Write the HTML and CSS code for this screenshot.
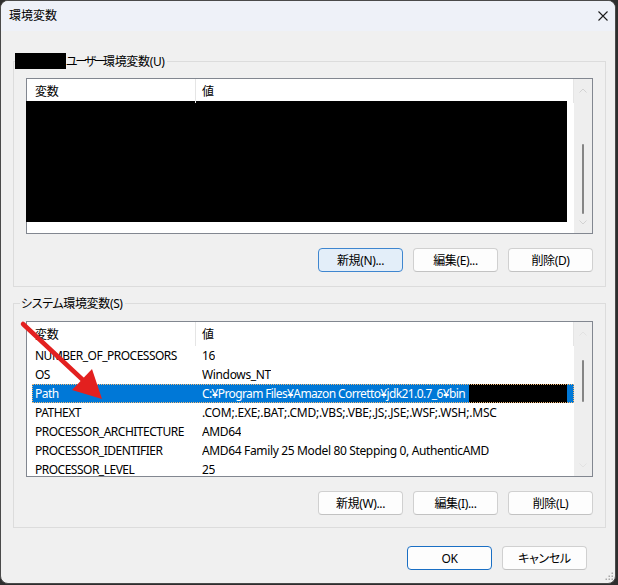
FILE: index.html
```html
<!DOCTYPE html>
<html lang="ja">
<head>
<meta charset="utf-8">
<title>環境変数</title>
<link rel="stylesheet" href="styles.css">
</head>
<body>
<div class="window">
  <div class="titlebar">
    <span class="title">環境変数</span>
    <svg class="close" width="10" height="10" viewBox="0 0 10 10"><path d="M0.5 0.5L9.5 9.5M9.5 0.5L0.5 9.5" stroke="#1b1b1b" stroke-width="1.1" fill="none"/></svg>
  </div>
  <div class="content">
    <div class="group">
      <div class="group-title user"><span class="redact-title"></span><span><span class="kana-tight">ユーザー</span>環境変数(U)</span></div>
      <div class="list">
        <div class="list-main open">
          <div class="list-header">
            <div class="hcell1">変数</div>
            <div class="hcell2">値</div>
          </div>
          <div class="redact-block"></div>
        </div>
        <div class="scrollbar">
          <svg class="arrow-up" width="8" height="5" viewBox="0 0 8 5"><path d="M0.5 4.5L4 1L7.5 4.5" stroke="#d2d2d2" fill="none"/></svg>
          <div class="thumb thumb-user"></div>
          <svg class="arrow-down" width="8" height="5" viewBox="0 0 8 5"><path d="M0.5 0.5L4 4L7.5 0.5" stroke="#d2d2d2" fill="none"/></svg>
        </div>
      </div>
      <div class="btn-row">
        <div class="btn focus">新規(N)...</div>
        <div class="btn">編集(E)...</div>
        <div class="btn">削除(D)</div>
      </div>
    </div>

    <div class="group sys">
      <div class="group-title system">システム環境変数(S)</div>
      <div class="list">
        <div class="list-main">
          <div class="list-header">
            <div class="hcell1">変数</div>
            <div class="hcell2">値</div>
          </div>
          <div class="row"><div class="cell1">NUMBER_OF_PROCESSORS</div><div class="cell2">16</div></div>
          <div class="row"><div class="cell1">OS</div><div class="cell2">Windows_NT</div></div>
          <div class="row selected"><div class="cell1">Path</div><div class="cell2"><span class="path-text">C:¥Program Files¥Amazon Corretto¥jdk21.0.7_6¥bin</span><span class="redact-row"></span></div></div>
          <div class="row"><div class="cell1">PATHEXT</div><div class="cell2 wide">.COM;.EXE;.BAT;.CMD;.VBS;.VBE;.JS;.JSE;.WSF;.WSH;.MSC</div></div>
          <div class="row"><div class="cell1">PROCESSOR_ARCHITECTURE</div><div class="cell2">AMD64</div></div>
          <div class="row"><div class="cell1">PROCESSOR_IDENTIFIER</div><div class="cell2">AMD64 Family 25 Model 80 Stepping 0, AuthenticAMD</div></div>
          <div class="row"><div class="cell1">PROCESSOR_LEVEL</div><div class="cell2">25</div></div>
        </div>
        <div class="scrollbar">
          <svg class="arrow-up" width="8" height="5" viewBox="0 0 8 5"><path d="M0.5 4.5L4 1L7.5 4.5" stroke="#e2e2e2" fill="none"/></svg>
          <div class="thumb thumb-sys"></div>
          <svg class="arrow-down" width="8" height="5" viewBox="0 0 8 5"><path d="M0.5 0.5L4 4L7.5 0.5" stroke="#e2e2e2" fill="none"/></svg>
        </div>
      </div>
      <div class="btn-row">
        <div class="btn">新規(W)...</div>
        <div class="btn">編集(I)...</div>
        <div class="btn">削除(L)</div>
      </div>
    </div>

    <div class="dialog-row">
      <div class="btn default">OK</div>
      <div class="btn">キャンセル</div>
    </div>
  </div>

  <svg class="red-arrow" width="120" height="410" viewBox="0 0 120 410">
    <line x1="23" y1="324" x2="84" y2="381" stroke="#e3201f" stroke-width="4.5" stroke-linecap="round"/>
    <polygon points="102,399 72,390 92,369" fill="#e3201f"/>
  </svg>
  <svg class="grip" width="10" height="10" viewBox="0 0 10 10">
    <rect x="7.5" y="1.5" width="1.5" height="1.5" fill="#a8a8a8"/>
    <rect x="7.5" y="4.5" width="1.5" height="1.5" fill="#a8a8a8"/>
    <rect x="4.5" y="4.5" width="1.5" height="1.5" fill="#a8a8a8"/>
    <rect x="7.5" y="7.5" width="1.5" height="1.5" fill="#a8a8a8"/>
    <rect x="4.5" y="7.5" width="1.5" height="1.5" fill="#a8a8a8"/>
    <rect x="1.5" y="7.5" width="1.5" height="1.5" fill="#a8a8a8"/>
  </svg>
</div>
</body>
</html>
```

FILE: styles.css
```css
html, body {
  margin: 0;
  padding: 0;
}
body {
  background: #2e2e2e;
  width: 618px;
  height: 585px;
  overflow: hidden;
  font-family: "Noto Sans", "Noto Sans CJK JP", sans-serif;
  font-size: 12px;
  letter-spacing: -0.35px;
  color: #000;
  font-feature-settings: "palt";
}
.window {
  position: relative;
  width: 616px;
  height: 584px;
  box-sizing: border-box;
  border: 1px solid #4a4a4a;
  border-radius: 8px;
  background: #f0f0f0;
  overflow: hidden;
}
.titlebar {
  height: 30px;
  display: flex;
  align-items: center;
  justify-content: space-between;
  padding: 0 7px 0 8px;
  background: #eef1f8;
}
.title {
  line-height: 16px;
  letter-spacing: 0;
}
.close {
  display: block;
}
.content {
  padding: 30px 9px 0 12px;
}
.group {
  border: 1px solid #dcdcdc;
  padding: 0 12px 14px 12px;
}
.group.sys {
  margin-top: 16px;
  padding-bottom: 12px;
}
.group-title {
  display: flex;
  align-items: center;
  height: 16px;
  width: fit-content;
  background: #f0f0f0;
  white-space: nowrap;
}
.group-title.user {
  margin: -9px 0 9px -11px;
  padding-right: 2px;
}
.group-title.system {
  margin: -9px 0 10px -6px;
  padding: 0 2px 0 1px;
}
.kana-tight {
  letter-spacing: -2.4px;
}
.redact-title {
  display: block;
  width: 51px;
  height: 16px;
  background: #000;
}
.list {
  display: flex;
  height: 156px;
  box-sizing: border-box;
  border: 1px solid #828790;
  background: #fff;
}
.list-main {
  flex: 1;
  overflow: hidden;
}
.list-main.open {
  overflow: visible;
}
.list-header {
  display: flex;
  height: 24px;
  line-height: 25px;
  border-right: 1px solid #e5e5e5;
}
.hcell1 {
  width: 169px;
  box-sizing: border-box;
  padding-left: 8px;
  border-right: 1px solid #e5e5e5;
}
.hcell2 {
  padding-left: 6px;
}
.redact-block {
  margin: -2px 0 0 -1px;
  width: 541px;
  height: 121px;
  background: #000;
}
.row {
  display: flex;
  height: 19px;
  line-height: 19px;
  margin-left: 5px;
  width: 542px;
  box-sizing: border-box;
  white-space: nowrap;
}
.cell1 {
  width: 170px;
  flex: none;
  box-sizing: border-box;
  padding-left: 3px;
  overflow: hidden;
  letter-spacing: -0.5px;
}
.cell2 {
  display: flex;
  overflow: hidden;
}
.cell2.wide {
  letter-spacing: -0.2px;
}
.row.selected {
  background: #0078d7;
  color: #fff;
  outline: 1px dotted #f2b874;
  outline-offset: -1px;
}
.path-text {
  display: block;
  width: 267px;
  overflow: hidden;
  letter-spacing: -0.62px;
}
.redact-row {
  display: block;
  width: 98px;
  height: 19px;
  background: #000;
}
.scrollbar {
  width: 18px;
  flex: none;
  background: #eeeeee;
  display: flex;
  flex-direction: column;
  align-items: center;
}
.arrow-up {
  display: block;
  margin-top: 9px;
}
.arrow-down {
  display: block;
  margin-top: auto;
  margin-bottom: 8px;
}
.thumb {
  width: 2px;
  background: #858585;
  border-radius: 1px;
}
.thumb-user {
  margin-top: 51px;
  height: 70px;
}
.thumb-sys {
  margin-top: 24px;
  height: 42px;
}
.btn-row {
  display: flex;
  justify-content: flex-end;
  gap: 10px;
  margin-top: 14px;
}
.btn {
  width: 85px;
  height: 24px;
  box-sizing: border-box;
  border: 1px solid #d0d0d0;
  border-bottom-color: #c2c2c2;
  border-radius: 4px;
  background: #fdfdfd;
  display: flex;
  align-items: center;
  justify-content: center;
  white-space: nowrap;
}
.btn.focus {
  background: #e3eef9;
  border-color: #3f86cf;
}
.btn.default {
  border-color: #1a6fc4;
}
.dialog-row {
  display: flex;
  justify-content: flex-end;
  gap: 10px;
  margin-top: 18px;
  padding-right: 19px;
}
.red-arrow {
  position: absolute;
  left: -1px;
  top: -1px;
  pointer-events: none;
}
.grip {
  position: absolute;
  right: 1px;
  bottom: 2px;
}
```
